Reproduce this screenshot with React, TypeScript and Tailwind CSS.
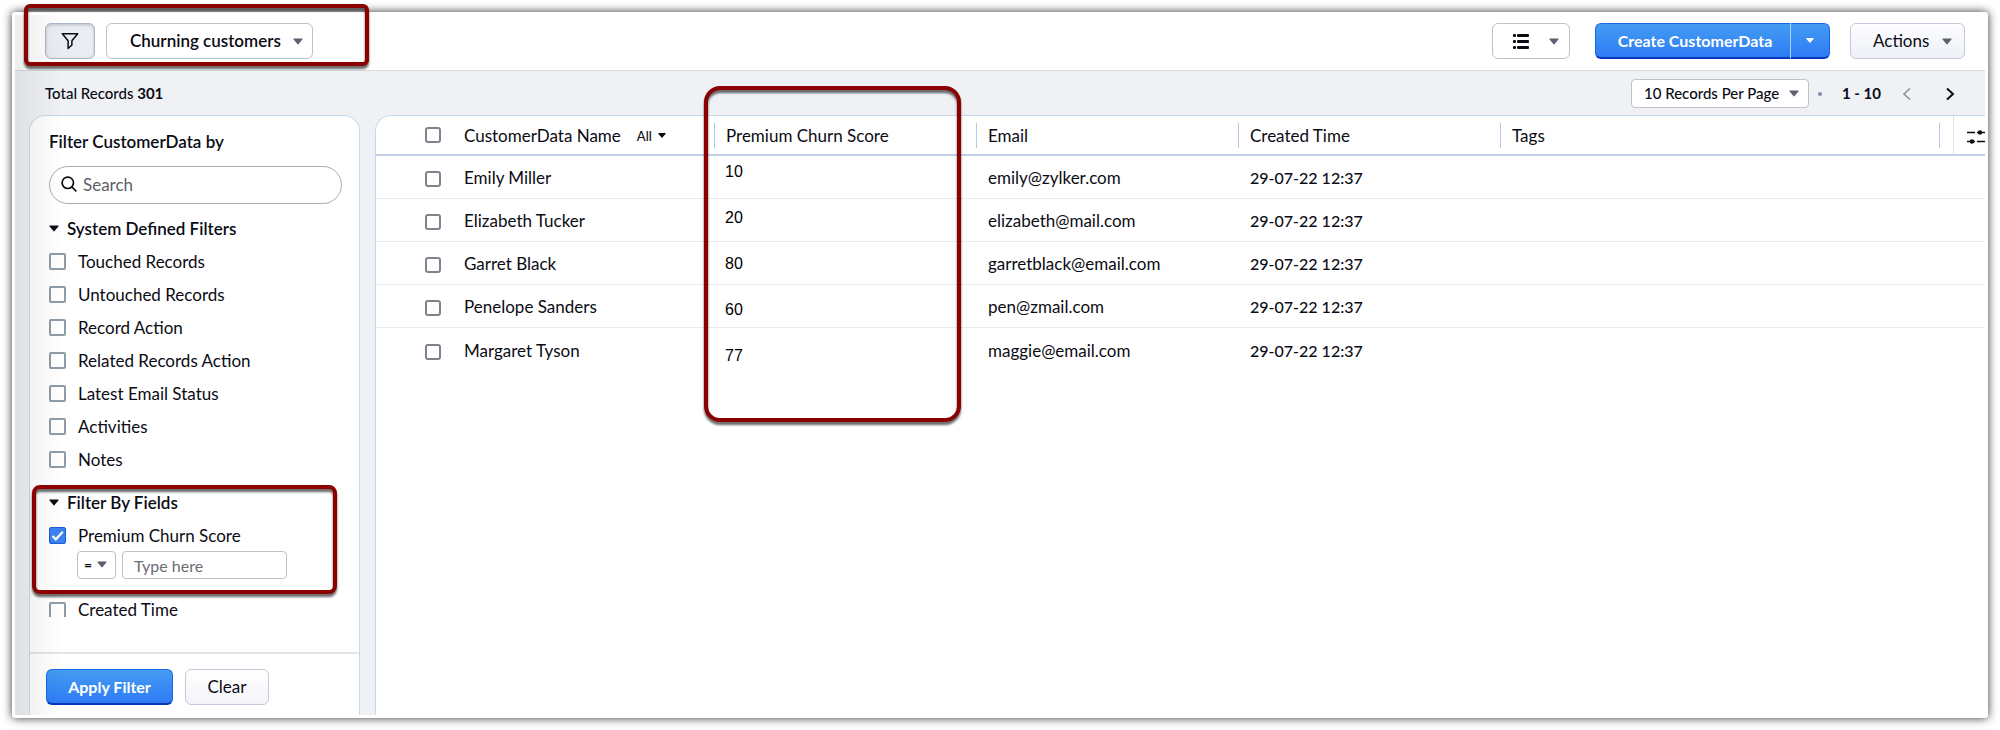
import React, { useState } from 'react';

interface Customer {
  name: string;
  email: string;
  created: string;
}

const customers: Customer[] = [
  { name: 'Emily Miller', email: 'emily@zylker.com', created: '29-07-22 12:37' },
  { name: 'Elizabeth Tucker', email: 'elizabeth@mail.com', created: '29-07-22 12:37' },
  { name: 'Garret Black', email: 'garretblack@email.com', created: '29-07-22 12:37' },
  { name: 'Penelope Sanders', email: 'pen@zmail.com', created: '29-07-22 12:37' },
  { name: 'Margaret Tyson', email: 'maggie@email.com', created: '29-07-22 12:37' },
];

const scores = [10, 20, 80, 60, 77];

const systemFilters = [
  'Touched Records',
  'Untouched Records',
  'Record Action',
  'Related Records Action',
  'Latest Email Status',
  'Activities',
  'Notes',
];

const Caret: React.FC<{ className?: string }> = ({ className = 'w-[10px]' }) => (
  <svg viewBox="0 0 10 7" className={`h-[7px] shrink-0 ${className}`} fill="currentColor" aria-hidden="true">
    <path d="M1 0.5h8c.6 0 .8.6.4 1L5.6 6.1c-.3.4-.9.4-1.2 0L.6 1.5C.2 1.1.4.5 1 .5z" />
  </svg>
);

// Red callout frame drawn over the content
const Callout: React.FC<{ className: string }> = ({ className }) => (
  <div
    className={`absolute z-10 pointer-events-none border-4 border-[#8b0000] drop-shadow-[0_3px_1px_rgba(0,0,0,0.6)] ${className}`}
  />
);

const FilterCheckbox: React.FC<{ label: string; defaultChecked?: boolean; className?: string; boxClass?: string }> = ({
  label,
  defaultChecked,
  className = 'h-[33px] items-center',
  boxClass = 'h-[17px]',
}) => (
  <label className={`flex gap-3 ${className}`}>
    <span className={`relative block w-[17px] shrink-0 overflow-hidden ${boxClass}`}>
      <input
        type="checkbox"
        defaultChecked={defaultChecked}
        className="peer block appearance-none w-[17px] h-[17px] rounded-[2px] border-2 border-[#8f9ba6] bg-white checked:bg-[#3b82f0] checked:border checked:border-[#1d5fd6]"
      />
      <svg
        viewBox="0 0 17 17"
        className="absolute inset-0 hidden peer-checked:block"
        fill="none"
        stroke="#fff"
        strokeWidth="2.2"
        aria-hidden="true"
      >
        <path d="M3.5 9l3.3 3.3L13.8 4.8" />
      </svg>
    </span>
    <span>{label}</span>
  </label>
);

const Toolbar: React.FC = () => (
  <header className="relative flex items-center h-[56px] pb-[3px] pl-[30px] pr-5 bg-white border-b border-[#d9dce3]">
    <button
      aria-label="Filter"
      className="flex items-center justify-center w-[50px] h-[36px] rounded-md border border-[#a9b7c6] bg-[#e9edf2] shadow-[inset_0_1px_3px_rgba(0,0,0,0.2)]"
    >
      <svg viewBox="0 0 18 18" className="w-[18px] h-[18px]" fill="none" stroke="#0b0b14" strokeWidth="1.5" aria-hidden="true">
        <path d="M1.3 1.7h15.4L10.9 8.8v4.2L7.1 16.5V8.8L1.3 1.7z" strokeLinejoin="round" />
      </svg>
    </button>
    <div className="relative ml-[11px]">
      <select
        aria-label="View"
        className="appearance-none block w-[207px] h-[36px] pl-[23px] rounded-md border border-[#bcc1ca] bg-white text-[17px] font-semibold"
      >
        <option>Churning customers</option>
      </select>
      <Caret className="w-[10px] absolute right-[10px] top-[15px] text-[#5c6070] pointer-events-none" />
    </div>
    <div className="flex-1" />
    <button
      aria-label="List view"
      className="flex items-center justify-between w-[78px] h-[36px] pl-5 pr-[10px] rounded-md border border-[#bcc1ca] bg-white"
    >
      <svg viewBox="0 0 16 15" className="w-[16px] h-[15px]" fill="#0b0b14" aria-hidden="true">
        <rect x="0" y="0" width="3" height="3" rx="1" />
        <rect x="4" y="0" width="12" height="3" rx="1" />
        <rect x="0" y="6" width="3" height="3" rx="1" />
        <rect x="4" y="6" width="12" height="3" rx="1" />
        <rect x="0" y="12" width="3" height="3" rx="1" />
        <rect x="4" y="12" width="12" height="3" rx="1" />
      </svg>
      <Caret className="w-[10px] text-[#5c6070]" />
    </button>
    <div className="flex ml-[25px] text-white">
      <button className="w-[196px] h-[36px] pl-1 rounded-l-md border border-[#1668e8] border-b-2 border-b-[#0838b8] border-r-[#a9d0ff] bg-linear-to-b from-[#449cf0] to-[#2f7bf6] text-base font-bold">
        Create CustomerData
      </button>
      <button
        aria-label="More create options"
        className="flex items-center justify-center w-[39px] h-[36px] rounded-r-md border border-l-0 border-[#1668e8] border-b-2 border-b-[#0838b8] bg-linear-to-b from-[#449cf0] to-[#2f7bf6]"
      >
        <Caret className="w-[8px]" />
      </button>
    </div>
    <button className="flex items-center justify-between ml-5 w-[115px] h-[36px] pl-[22px] pr-3 rounded-md border border-[#c5c9da] bg-linear-to-b from-[#fdfdff] to-[#eff1f8] text-[17px]">
      Actions
      <Caret className="w-[10px] text-[#5c6070]" />
    </button>
    <Callout className="left-[9px] -top-[11px] w-[345px] h-[62px] rounded-md" />
  </header>
);

const RecordBar: React.FC = () => (
  <div className="flex items-center h-[44px] pl-[30px] pr-[30px]">
    <p className="font-medium text-[15px]">
      Total Records <span className="font-bold">301</span>
    </p>
    <div className="flex-1" />
    <div className="relative mt-px">
      <select
        aria-label="Records per page"
        className="appearance-none block w-[178px] h-[29px] pl-3 rounded border border-[#bcc1ca] bg-white text-[15px] font-medium"
      >
        <option>10 Records Per Page</option>
      </select>
      <Caret className="w-[10px] absolute right-[10px] top-[11px] text-[#5c6070] pointer-events-none" />
    </div>
    <span className="mx-[9px] mt-px w-1 h-1 rounded-full bg-[#7d8ea8]" />
    <span className="ml-[11px] mt-px text-[15px] font-bold">1 - 10</span>
    <button aria-label="Previous page" className="ml-[21px] mt-px">
      <svg viewBox="0 0 10 14" className="w-[10px] h-[14px]" fill="none" stroke="#8a8f99" strokeWidth="1.6" aria-hidden="true">
        <path d="M8 1.5L2 7l6 5.5" />
      </svg>
    </button>
    <button aria-label="Next page" className="ml-[33px] mt-px">
      <svg viewBox="0 0 10 14" className="w-[10px] h-[14px]" fill="none" stroke="#0b0b14" strokeWidth="2" aria-hidden="true">
        <path d="M2 1.5L8 7l-6 5.5" />
      </svg>
    </button>
  </div>
);

const FilterPanel: React.FC = () => {
  const [query, setQuery] = useState('');

  return (
    <aside className="flex flex-col w-[331px] shrink-0 rounded-t-2xl border border-b-0 border-[#c6d8ea] bg-white">
      <div className="px-[19px] pt-4">
        <h2 className="leading-5 font-semibold">Filter CustomerData by</h2>
        <div className="relative mt-[14px]">
          <svg viewBox="0 0 16 16" className="absolute left-3 top-[10px] w-[16px] h-[16px]" fill="none" stroke="#0b0b14" strokeWidth="1.7" aria-hidden="true">
            <circle cx="6.8" cy="6.8" r="5.7" />
            <path d="M11 11l4.3 4.3" />
          </svg>
          <input
            type="text"
            aria-label="Search filters"
            placeholder="Search"
            value={query}
            onChange={(e) => setQuery(e.target.value)}
            className="block w-[293px] h-[38px] pl-[33px] pb-0.5 rounded-full border border-[#a9aeb8] bg-white placeholder-[#5f6268]"
          />
        </div>

        <h3 className="flex items-center gap-2 mt-[8px] h-[33px] font-semibold">
          <Caret />
          System Defined Filters
        </h3>
        {systemFilters.map((label) => (
          <FilterCheckbox key={label} label={label} />
        ))}

        <section className="relative mt-[10px]">
          <h3 className="flex items-center gap-2 h-[33px] font-semibold">
            <Caret />
            Filter By Fields
          </h3>
          <FilterCheckbox label="Premium Churn Score" defaultChecked />
          <div className="flex gap-[6px] ml-7 -mt-px">
            <div className="relative">
              <select
                aria-label="Operator"
                className="appearance-none block w-[39px] h-[28px] pl-[6px] rounded border border-[#bcc1ca] bg-white text-sm font-bold"
              >
                <option>=</option>
              </select>
              <Caret className="w-[10px] absolute right-[9px] top-[10px] text-[#5c6070] pointer-events-none" />
            </div>
            <input
              type="text"
              aria-label="Premium Churn Score value"
              placeholder="Type here"
              className="w-[165px] h-[28px] pl-[11px] rounded border border-[#bcc1ca] bg-white text-base placeholder-[#6b6e75]"
            />
          </div>
          <Callout className="-left-[17px] right-[3px] -top-px h-[109px] rounded-lg" />
        </section>

        {/* last row of the scroll area, its box cut at the lower edge */}
        <FilterCheckbox label="Created Time" className="mt-[23px] h-4 leading-4" boxClass="h-[15px]" />
      </div>
      <div className="flex gap-3 mt-[34px] pt-[15px] pb-[10px] pl-4 border-t-2 border-[#e3e4e8]">
        <button className="w-[127px] h-[36px] rounded-md border border-[#1668e8] border-b-2 border-b-[#0838b8] bg-linear-to-b from-[#449cf0] to-[#2f7bf6] text-white text-base font-bold">
          Apply Filter
        </button>
        <button className="w-[84px] h-[36px] rounded-md border border-[#c5c9da] bg-linear-to-b from-white to-[#f3f4fa]">
          Clear
        </button>
      </div>
    </aside>
  );
};

const Th: React.FC<{ children?: React.ReactNode; divider?: boolean }> = ({ children, divider = true }) => (
  <th className="relative h-[40px] p-0 border-b-2 border-[#c2d2e6] font-normal text-left">
    <div className={`h-[25px] leading-[26px] ${divider ? 'pl-[11px] border-l border-[#b5cae2]' : ''}`}>{children}</div>
  </th>
);

const Checkbox: React.FC<{ label: string }> = ({ label }) => (
  <input
    type="checkbox"
    aria-label={label}
    className="block appearance-none ml-[49px] w-4 h-4 rounded-[3px] border-2 border-[#7e838d] bg-white checked:bg-[#3b82f0]"
  />
);

const RecordTable: React.FC = () => (
  <main className="flex-1 min-w-0 rounded-tl-2xl border border-r-0 border-b-0 border-[#c6d8ea] bg-white">
    <table className="w-full table-fixed border-separate border-spacing-0">
      <colgroup>
        <col className="w-[88px]" />
        <col className="w-[250px]" />
        <col className="w-[262px]" />
        <col className="w-[262px]" />
        <col className="w-[262px]" />
        <col />
        <col className="w-[14px]" />
        <col className="w-[32px]" />
      </colgroup>
      <thead>
        <tr>
          <th className="h-[40px] p-0 border-b-2 border-[#c2d2e6]">
            <Checkbox label="Select all" />
          </th>
          <Th divider={false}>
            <span className="flex items-center">
              CustomerData Name
              <button className="flex items-center gap-[6px] ml-4 text-[13px] font-medium">
                All
                <Caret className="w-[8px]" />
              </button>
            </span>
          </Th>
          <Th>
            Premium Churn Score
            <Callout className="-left-[10px] -top-[30px] w-[257px] h-[336px] rounded-2xl" />
            <ul className="absolute left-[11px] top-[33px] font-['Liberation_Sans',sans-serif] text-base text-black">
              {scores.map((score) => (
                <li key={score} className="h-[46px] leading-[46px]">
                  {score}
                </li>
              ))}
            </ul>
          </Th>
          <Th>Email</Th>
          <Th>Created Time</Th>
          <Th>Tags</Th>
          <Th />
          <th className="h-[40px] p-0 border-b-2 border-l border-[#c2d2e6] border-l-[#dbe3ec]">
            <button aria-label="Manage columns" className="block ml-[13px] mt-1 w-[18px] overflow-hidden">
              <svg viewBox="0 0 18 14" className="w-[18px] h-[14px]" fill="none" stroke="#0b0b14" strokeWidth="1.5" aria-hidden="true">
                <path d="M0 2.5h8M10 2.5h8M0 11.500h8M10 11.500h8" />
                <circle cx="13" cy="2.500" r="2.200" fill="#0b0b14" stroke="none" />
                <circle cx="5" cy="11.500" r="2.200" fill="#0b0b14" stroke="none" />
              </svg>
            </button>
          </th>
        </tr>
      </thead>
      <tbody className="[&>tr:not(:last-child)>td]:border-b [&>tr>td]:border-[#e8eaee]">
        {customers.map((c) => (
          <tr key={c.name} className="h-[43px]">
            <td className="p-0 pt-1">
              <Checkbox label={`Select ${c.name}`} />
            </td>
            <td className="p-0 pt-0.5">{c.name}</td>
            <td className="p-0" />
            <td className="p-0 pt-0.5 pl-3">{c.email}</td>
            <td className="p-0 pt-0.5 pl-3 text-base font-medium">{c.created}</td>
            <td className="p-0" />
            <td className="p-0" />
            <td className="p-0" />
          </tr>
        ))}
      </tbody>
    </table>
  </main>
);

const App: React.FC = () => {
  return (
    <div className="min-h-screen flex p-3 pb-[13px] bg-white font-['Lato',sans-serif] text-[17px] text-[#0b0b14]">
      <div className="relative flex-1 min-w-0 flex flex-col p-[3px] rounded-[3px] bg-white shadow-[0_0_10px_rgba(0,0,0,0.8)]">
        <Toolbar />
        <div className="flex-1 flex flex-col bg-[#eff1f4]">
          <RecordBar />
          <div className="flex-1 flex gap-[15px] pl-[14px]">
            <FilterPanel />
            <RecordTable />
          </div>
        </div>
        <div className="absolute left-[3px] inset-y-[3px] w-12 bg-linear-to-r from-black/7 to-transparent pointer-events-none" />
      </div>
    </div>
  );
};

export default App;
